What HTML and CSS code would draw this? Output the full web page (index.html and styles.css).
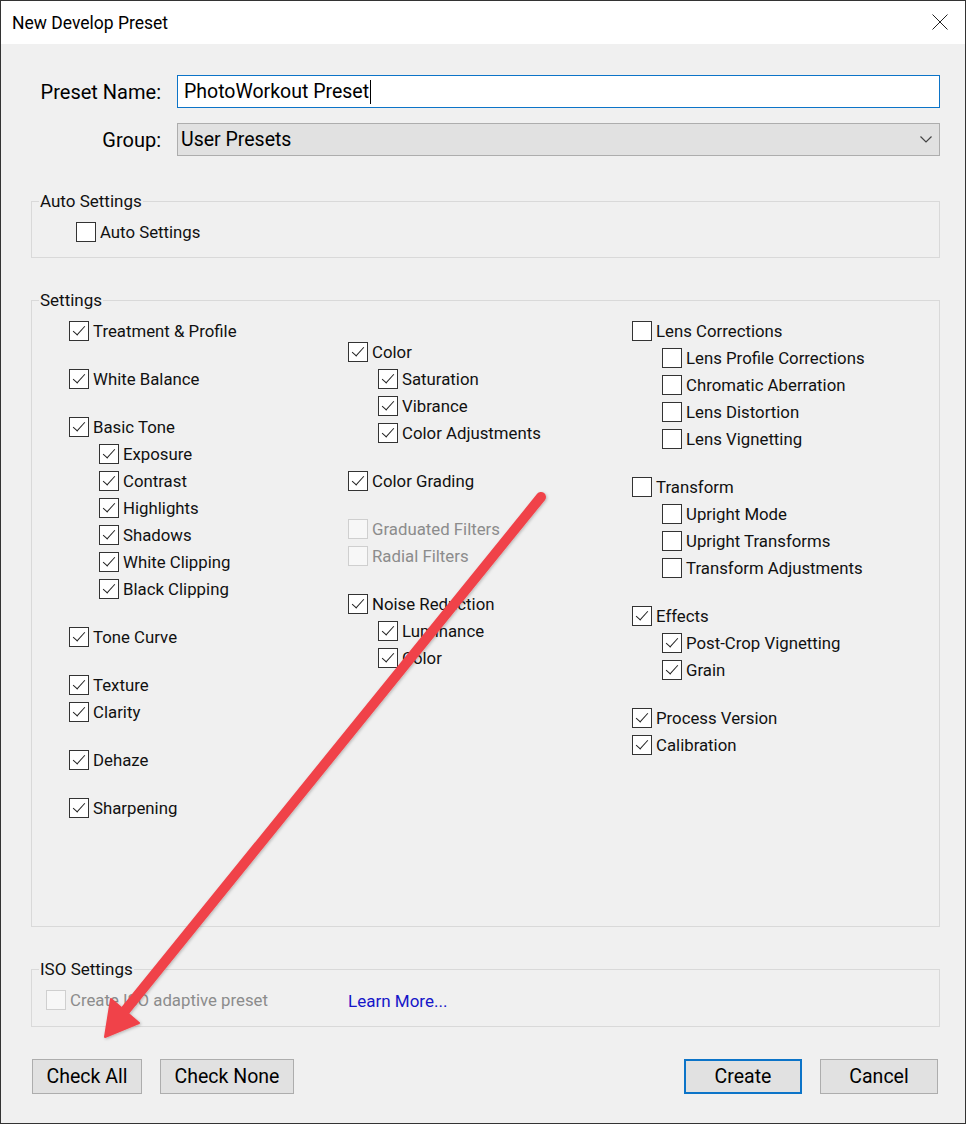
FILE: index.html
```html
<!DOCTYPE html>
<html>
<head>
    <title>New Develop Preset</title>
    <link rel="stylesheet" href="styles.css">
</head>
<body>
    <div class="window">
        <div class="titlebar">
            <span class="title">New Develop Preset</span>
            <svg class="close" width="16" height="16" viewBox="0 0 16 16">
                <path d="M0.5 0.5 L15.5 15.5 M15.5 0.5 L0.5 15.5" stroke="#222" stroke-width="1" fill="none"/>
            </svg>
        </div>

        <div class="dialog-body">
            <div class="form-row">
                <label class="field-label">Preset Name:</label>
                <div class="text-input">PhotoWorkout Preset<span class="caret"></span></div>
            </div>
            <div class="form-row">
                <label class="field-label">Group:</label>
                <div class="select">
                    <span>User Presets</span>
                    <svg width="12" height="7" viewBox="0 0 12 7">
                        <path d="M0.5 0.5 L6 6 L11.5 0.5" stroke="#444" stroke-width="1.2" fill="none"/>
                    </svg>
                </div>
            </div>

            <fieldset class="group group-auto">
                <legend>Auto Settings</legend>
                <div class="auto-content">
                    <div class="cb-row"><span class="cb"></span>Auto Settings</div>
                </div>
            </fieldset>

            <fieldset class="group group-settings">
                <legend>Settings</legend>
                <div class="settings-grid">
                    <div class="col">
                        <div class="cb-row"><span class="cb on"></span>Treatment &amp; Profile</div>
                        <div class="spacer"></div>
                        <div class="cb-row"><span class="cb on"></span>White Balance</div>
                        <div class="spacer"></div>
                        <div class="cb-row"><span class="cb on"></span>Basic Tone</div>
                        <div class="cb-row sub"><span class="cb on"></span>Exposure</div>
                        <div class="cb-row sub"><span class="cb on"></span>Contrast</div>
                        <div class="cb-row sub"><span class="cb on"></span>Highlights</div>
                        <div class="cb-row sub"><span class="cb on"></span>Shadows</div>
                        <div class="cb-row sub"><span class="cb on"></span>White Clipping</div>
                        <div class="cb-row sub"><span class="cb on"></span>Black Clipping</div>
                        <div class="spacer"></div>
                        <div class="cb-row"><span class="cb on"></span>Tone Curve</div>
                        <div class="spacer"></div>
                        <div class="cb-row"><span class="cb on"></span>Texture</div>
                        <div class="cb-row"><span class="cb on"></span>Clarity</div>
                        <div class="spacer"></div>
                        <div class="cb-row"><span class="cb on"></span>Dehaze</div>
                        <div class="spacer"></div>
                        <div class="cb-row"><span class="cb on"></span>Sharpening</div>
                    </div>
                    <div class="col">
                        <div class="spacer"></div>
                        <div class="cb-row"><span class="cb on"></span>Color</div>
                        <div class="cb-row sub"><span class="cb on"></span>Saturation</div>
                        <div class="cb-row sub"><span class="cb on"></span>Vibrance</div>
                        <div class="cb-row sub"><span class="cb on"></span>Color Adjustments</div>
                        <div class="spacer"></div>
                        <div class="cb-row"><span class="cb on"></span>Color Grading</div>
                        <div class="spacer"></div>
                        <div class="cb-row disabled"><span class="cb"></span>Graduated Filters</div>
                        <div class="cb-row disabled"><span class="cb"></span>Radial Filters</div>
                        <div class="spacer"></div>
                        <div class="cb-row"><span class="cb on"></span>Noise Reduction</div>
                        <div class="cb-row sub"><span class="cb on"></span>Luminance</div>
                        <div class="cb-row sub"><span class="cb on"></span>Color</div>
                    </div>
                    <div class="col">
                        <div class="cb-row"><span class="cb"></span>Lens Corrections</div>
                        <div class="cb-row sub"><span class="cb"></span>Lens Profile Corrections</div>
                        <div class="cb-row sub"><span class="cb"></span>Chromatic Aberration</div>
                        <div class="cb-row sub"><span class="cb"></span>Lens Distortion</div>
                        <div class="cb-row sub"><span class="cb"></span>Lens Vignetting</div>
                        <div class="spacer"></div>
                        <div class="cb-row"><span class="cb"></span>Transform</div>
                        <div class="cb-row sub"><span class="cb"></span>Upright Mode</div>
                        <div class="cb-row sub"><span class="cb"></span>Upright Transforms</div>
                        <div class="cb-row sub"><span class="cb"></span>Transform Adjustments</div>
                        <div class="spacer"></div>
                        <div class="cb-row"><span class="cb on"></span>Effects</div>
                        <div class="cb-row sub"><span class="cb on"></span>Post-Crop Vignetting</div>
                        <div class="cb-row sub"><span class="cb on"></span>Grain</div>
                        <div class="spacer"></div>
                        <div class="cb-row"><span class="cb on"></span>Process Version</div>
                        <div class="cb-row"><span class="cb on"></span>Calibration</div>
                    </div>
                </div>
            </fieldset>

            <fieldset class="group group-iso">
                <legend>ISO Settings</legend>
                <div class="iso-row">
                    <div class="cb-row disabled"><span class="cb"></span>Create ISO adaptive preset</div>
                    <a class="learn-more">Learn More...</a>
                </div>
            </fieldset>

            <div class="button-bar">
                <div class="button-group">
                    <button class="btn btn-check-all">Check All</button>
                    <button class="btn btn-check-none">Check None</button>
                </div>
                <div class="button-group">
                    <button class="btn btn-default">Create</button>
                    <button class="btn">Cancel</button>
                </div>
            </div>
        </div>

        <!-- annotation arrow drawn over the dialog -->
        <svg class="arrow" width="966" height="1124" viewBox="0 0 966 1124">
            <defs>
                <filter id="shadow" x="-10%" y="-10%" width="120%" height="120%">
                    <feDropShadow dx="1" dy="1" stdDeviation="1.5" flood-color="#000" flood-opacity="0.25"/>
                </filter>
            </defs>
            <g filter="url(#shadow)" fill="#f0434a" stroke="#f0434a">
                <line x1="541" y1="497" x2="124" y2="1012" stroke-width="10" stroke-linecap="round"/>
                <polygon points="105,1037 139,1023 111,999" stroke-width="2" stroke-linejoin="round"/>
            </g>
        </svg>
    </div>
</body>
</html>
```

FILE: styles.css
```css
body {
    margin: 0;
    background-color: #f0f0f0;
    font-family: Roboto, "Noto Sans", sans-serif;
    color: #111;
}

.window {
    position: relative;
    width: 966px;
    height: 1124px;
    box-sizing: border-box;
    border: 1px solid #333;
    background-color: #f0f0f0;
    overflow: hidden;
}

.titlebar {
    height: 43px;
    background-color: #fff;
    display: flex;
    align-items: center;
    justify-content: space-between;
    padding: 0 17px 0 11px;
}

.title {
    font-size: 17.5px;
    color: #000;
}

.close {
    margin-top: -1px;
}

.dialog-body {
    padding: 31px 25px 0 30px;
}

.form-row {
    display: grid;
    grid-template-columns: 146px 1fr;
    align-items: center;
    height: 33px;
    margin-bottom: 15px;
}

.form-row:nth-child(2) {
    margin-bottom: 35px;
}

.field-label {
    text-align: right;
    padding-right: 16px;
    font-size: 20px;
    color: #000;
}

.text-input {
    height: 33px;
    box-sizing: border-box;
    border: 1px solid #0c74c8;
    background-color: #fff;
    padding-left: 6px;
    font-size: 19.5px;
    line-height: 31px;
    color: #000;
    display: flex;
    align-items: center;
}

.caret {
    display: inline-block;
    width: 1px;
    height: 24px;
    background-color: #000;
    margin-left: 1px;
}

.select {
    height: 33px;
    box-sizing: border-box;
    border: 1px solid #adadad;
    background-color: #e1e1e1;
    padding: 0 7px 0 3px;
    font-size: 19.5px;
    color: #000;
    display: flex;
    align-items: center;
    justify-content: space-between;
}

.group {
    margin: 0;
    padding: 0;
    min-width: 0;
    border: 1px solid #d9d9d9;
}

.group legend {
    margin-left: 7px;
    padding: 0 1px;
    font-size: 17px;
    line-height: 20px;
    color: #111;
}

.auto-content {
    padding: 7px 0 12px 44px;
}

.group-settings {
    margin-top: 32px;
}

.settings-grid {
    display: grid;
    grid-template-columns: 279px 284px 1fr;
    height: 616px;
    box-sizing: border-box;
    padding: 7px 0 0 37px;
}

.col {
    display: flex;
    flex-direction: column;
}

.spacer {
    height: 21px;
}

.cb-row {
    height: 27px;
    display: flex;
    align-items: center;
    gap: 4px;
    font-size: 16.8px;
    color: #111;
    white-space: nowrap;
}

.cb-row.sub {
    padding-left: 30px;
}

.cb {
    position: relative;
    width: 20px;
    height: 20px;
    box-sizing: border-box;
    border: 1px solid #333;
    background-color: #fff;
    flex: none;
}

.cb.on::after {
    content: "";
    position: absolute;
    left: 6px;
    top: 1px;
    width: 5px;
    height: 11px;
    border-right: 1.6px solid #222;
    border-bottom: 1.6px solid #222;
    transform: rotate(42deg);
}

.cb-row.disabled {
    color: #8c8c8c;
}

.cb-row.disabled .cb {
    border-color: #cfcfcf;
    background-color: #f7f7f7;
}

.group-iso {
    margin-top: 32px;
}

.iso-row {
    display: grid;
    grid-template-columns: 302px auto;
    align-items: center;
    padding: 7px 0 13px 14px;
}

.learn-more {
    font-size: 17px;
    color: #1616c8;
    padding-top: 3px;
}

.button-bar {
    margin-top: 32px;
    display: flex;
    justify-content: space-between;
    padding: 0 2px 0 1px;
}

.button-group {
    display: flex;
    gap: 18px;
}

.btn {
    height: 35px;
    width: 118px;
    box-sizing: border-box;
    border: 1px solid #adadad;
    background-color: #e1e1e1;
    font-family: Roboto, "Noto Sans", sans-serif;
    font-size: 19.5px;
    color: #000;
    padding: 0;
}

.btn-check-all {
    width: 110px;
}

.btn-check-none {
    width: 134px;
}

.btn-default {
    border: 2px solid #0c74c8;
}

.arrow {
    position: absolute;
    top: -1px;
    left: -1px;
    pointer-events: none;
}
```
